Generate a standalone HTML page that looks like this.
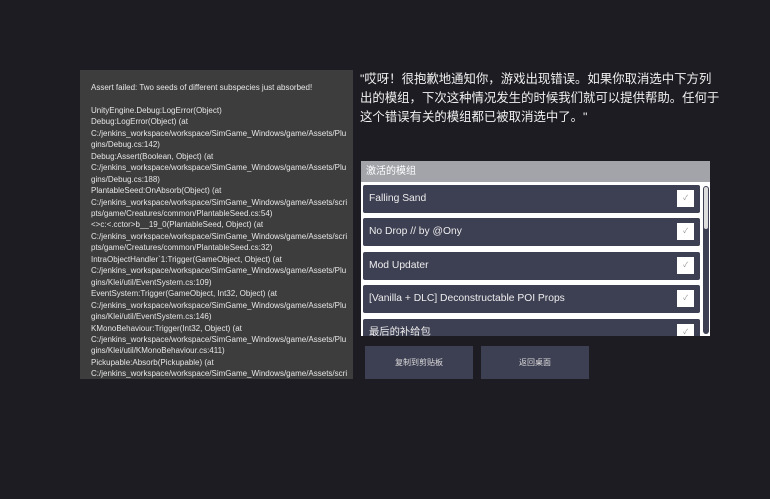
<!DOCTYPE html>
<html><head><meta charset="utf-8"><style>
body{margin:0;width:770px;height:499px;background:#1c1c22;position:relative;overflow:hidden;font-family:"Liberation Sans","Noto Sans CJK SC",sans-serif}
.log{position:absolute;left:80px;top:70px;width:273px;height:309px;background:#3d3d3d;color:#e6e6e6;font-size:8px;line-height:11.45px;overflow:hidden}
.log div{position:absolute;left:11px;top:12px;width:262px;white-space:pre}
.msg{position:absolute;left:360px;top:70px;width:370px;color:#f0f0f0;font-size:12.4px;line-height:19px;font-family:"Liberation Sans","Noto Sans CJK SC",sans-serif}
.hdr{position:absolute;left:361px;top:161px;width:349px;height:21px;background:#a2a4aa;color:#fff;font-size:10px;line-height:21px;padding-left:5px;box-sizing:border-box}
.list{position:absolute;left:361px;top:182px;width:349px;height:154px;background:#fff;overflow:hidden}
.item{position:absolute;left:2px;width:337px;height:28px;background:#3d3f52;border-radius:2px;color:#eee;font-size:10.3px;line-height:28px;padding-left:6px;box-sizing:border-box}
.cb{position:absolute;right:6px;top:5px;width:17px;height:17px;background:#fff;color:#888;font-size:7px;line-height:17px;text-align:center}
.sb{position:absolute;left:342px;top:4px;width:6px;height:148px;background:#3d3f52;border-radius:3px}
.sb i{position:absolute;left:1px;top:1px;width:4px;height:42px;background:#ddd;border-radius:2px}
.btn{position:absolute;top:346px;width:108px;height:33px;background:#3d3f52;color:#ddd;font-size:8px;line-height:33px;text-align:center}
</style></head><body>
<div class="log"><div>Assert failed: Two seeds of different subspecies just absorbed!

UnityEngine.Debug:LogError(Object)
Debug:LogError(Object) (at
C:/jenkins_workspace/workspace/SimGame_Windows/game/Assets/Plu
gins/Debug.cs:142)
Debug:Assert(Boolean, Object) (at
C:/jenkins_workspace/workspace/SimGame_Windows/game/Assets/Plu
gins/Debug.cs:188)
PlantableSeed:OnAbsorb(Object) (at
C:/jenkins_workspace/workspace/SimGame_Windows/game/Assets/scri
pts/game/Creatures/common/PlantableSeed.cs:54)
&lt;&gt;c:&lt;.cctor&gt;b__19_0(PlantableSeed, Object) (at
C:/jenkins_workspace/workspace/SimGame_Windows/game/Assets/scri
pts/game/Creatures/common/PlantableSeed.cs:32)
IntraObjectHandler`1:Trigger(GameObject, Object) (at
C:/jenkins_workspace/workspace/SimGame_Windows/game/Assets/Plu
gins/Klei/util/EventSystem.cs:109)
EventSystem:Trigger(GameObject, Int32, Object) (at
C:/jenkins_workspace/workspace/SimGame_Windows/game/Assets/Plu
gins/Klei/util/EventSystem.cs:146)
KMonoBehaviour:Trigger(Int32, Object) (at
C:/jenkins_workspace/workspace/SimGame_Windows/game/Assets/Plu
gins/Klei/util/KMonoBehaviour.cs:411)
Pickupable:Absorb(Pickupable) (at
C:/jenkins_workspace/workspace/SimGame_Windows/game/Assets/scri</div></div>
<div class="msg">"哎呀！很抱歉地通知你，游戏出现错误。如果你取消选中下方列<br>出的模组，下次这种情况发生的时候我们就可以提供帮助。任何于<br>这个错误有关的模组都已被取消选中了。"</div>
<div class="hdr">激活的模组</div>
<div class="list">
<div class="item" style="top:3px">Falling Sand<span class="cb">✓</span></div>
<div class="item" style="top:36px">No Drop // by @Ony<span class="cb">✓</span></div>
<div class="item" style="top:70px">Mod Updater<span class="cb">✓</span></div>
<div class="item" style="top:103px">[Vanilla + DLC] Deconstructable POI Props<span class="cb">✓</span></div>
<div class="item" style="top:137px">最后的补给包<span class="cb">✓</span></div>
<div class="sb"><i></i></div>
</div>
<div class="btn" style="left:365px">复制到剪贴板</div>
<div class="btn" style="left:481px">返回桌面</div>
</body></html>
